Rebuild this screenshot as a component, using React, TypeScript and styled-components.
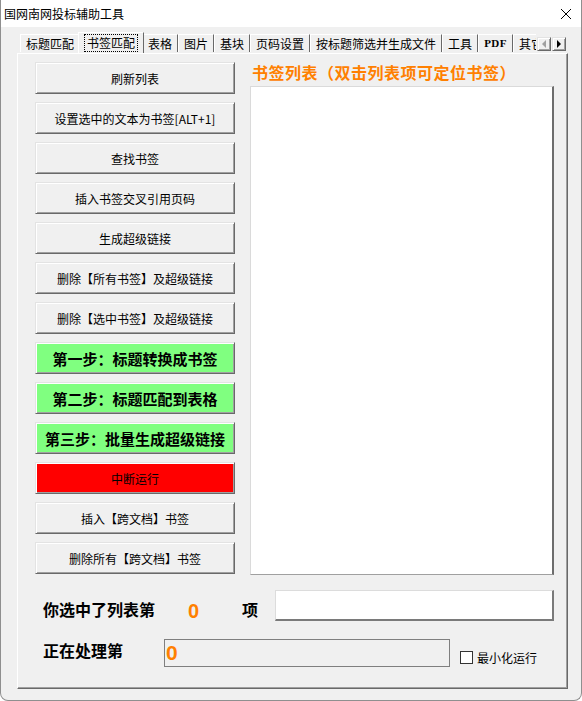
import React from "react";
import styled, { createGlobalStyle, css } from "styled-components";

const GlobalStyle = createGlobalStyle`
  html, body { margin: 0; padding: 0; background: #ffffff; }
  body { font-family: "Noto Sans CJK SC", "Liberation Sans", sans-serif; color: #000; }
  * { box-sizing: border-box; }
`;

const Window = styled.div`
  width: 582px;
  height: 701px;
  display: flex;
  flex-direction: column;
  background: #f0f0f0;
  border-left: 1px solid #8f8f8f;
  border-right: 1px solid #8f8f8f;
  border-bottom: 1px solid #8f8f8f;
  border-radius: 0 0 8px 8px;
  overflow: hidden;
`;

const TitleBar = styled.div`
  height: 27px;
  flex-shrink: 0;
  background: #ffffff;
  display: flex;
  align-items: center;
  justify-content: space-between;
  padding: 0 9px 0 3px;
`;

const Title = styled.span`
  font-size: 12px;
  line-height: 16px;
  color: #000;
`;

const CloseBox = styled.span`
  display: flex;
  width: 12px;
  height: 12px;
`;

const Body = styled.div`
  flex: 1;
  display: flex;
  flex-direction: column;
  padding: 6px 13px 11px 16px;
  min-height: 0;
`;

const TabStrip = styled.div`
  height: 20px;
  flex-shrink: 0;
  display: flex;
  align-items: flex-end;
  padding-left: 3px;
`;

const Tabs = styled.div`
  flex: 1;
  height: 21px;
  display: flex;
  align-items: flex-start;
  overflow: hidden;
  position: relative;
  z-index: 1;
`;

const Tab = styled.div<{ $active?: boolean; $latin?: boolean }>`
  flex-shrink: 0;
  height: 18px;
  margin-top: 2px;
  padding: 0 5px;
  border-top: 1px solid #ffffff;
  border-left: 1px solid #ffffff;
  border-right: 1px solid #696969;
  background: #f0f0f0;
  font-size: 12px;
  line-height: 17px;
  white-space: nowrap;
  ${(p) =>
    p.$latin &&
    css`
      font-family: "Liberation Serif", "DejaVu Serif", serif;
      font-size: 11px;
      font-weight: bold;
      letter-spacing: 0.5px;
    `}
  ${(p) =>
    p.$active &&
    css`
      height: 21px;
      margin: 0 -2px;
      padding: 1px 6px 0 6px;
      position: relative;
      z-index: 2;
    `}
`;

const Focus = styled.span`
  display: inline-block;
  outline: 1px dotted #000;
  outline-offset: 0px;
  padding: 0 2px;
  line-height: 16px;
`;

const Arrows = styled.div`
  display: flex;
  align-self: flex-start;
  margin-top: 4px;
  margin-right: 2px;
`;

const ArrowBtn = styled.div`
  width: 14px;
  height: 14px;
  display: flex;
  align-items: center;
  justify-content: center;
  background: #f0f0f0;
  border-color: #e3e3e3 #696969 #696969 #e3e3e3;
  border-style: solid;
  border-width: 1px;
  box-shadow: inset 1px 1px #fff, inset -1px -1px #a0a0a0;
  margin-left: 1px;
`;

const Panel = styled.div`
  flex: 1;
  min-height: 0;
  border-top: 1px solid #ffffff;
  border-left: 1px solid #ffffff;
  border-right: 1px solid #696969;
  border-bottom: 1px solid #696969;
  box-shadow: inset -1px -1px #a0a0a0;
  padding: 8px 0 0 17px;
  display: flex;
  flex-direction: column;
`;

const MainRow = styled.div`
  display: flex;
  gap: 15px;
`;

const ButtonColumn = styled.div`
  width: 200px;
  display: flex;
  flex-direction: column;
  gap: 8px;
`;

const Button = styled.div<{ $variant?: "green" | "red" }>`
  height: 32px;
  display: flex;
  align-items: center;
  justify-content: center;
  border-style: solid;
  border-width: 1px;
  border-color: #e3e3e3 #696969 #696969 #e3e3e3;
  box-shadow: inset 1px 1px #ffffff, inset -1px -1px #a0a0a0;
  background: #f0f0f0;
  font-size: 12px;
  white-space: nowrap;
  color: #000;
  ${(p) =>
    p.$variant === "green" &&
    css`
      background: #80ff80;
      font-size: 15px;
      font-weight: bold;
    `}
  ${(p) =>
    p.$variant === "red" &&
    css`
      background: #ff0000;
    `}
`;

const ListColumn = styled.div`
  width: 304px;
  display: flex;
  flex-direction: column;
`;

const ListTitle = styled.div`
  height: 20px;
  line-height: 20px;
  padding-left: 2px;
  color: #ff8000;
  font-size: 16px;
  font-weight: bold;
  letter-spacing: 0.5px;
  white-space: nowrap;
`;

const ListBox = styled.div`
  margin-top: 4px;
  height: 489px;
  background: #ffffff;
  border-top: 1px solid #dadada;
  border-left: 1px solid #dadada;
  border-right: 2px solid #6d6d6d;
  border-bottom: 1px solid #a0a0a0;
`;

const InfoRow = styled.div<{ $gapTop: number; $h: number }>`
  display: flex;
  align-items: flex-start;
  margin-top: ${(p) => p.$gapTop}px;
  height: ${(p) => p.$h}px;
  padding-left: 8px;
`;

const Label = styled.div<{ $w: number; $top?: number }>`
  width: ${(p) => p.$w}px;
  flex-shrink: 0;
  font-size: 16px;
  font-weight: bold;
  line-height: 22px;
  margin-top: ${(p) => p.$top ?? 0}px;
  white-space: nowrap;
`;

const Count = styled.div<{ $w?: number; $top?: number; $size?: number }>`
  ${(p) => (p.$w ? `width: ${p.$w}px;` : "")}
  flex-shrink: 0;
  font-family: "Liberation Sans", Arial, sans-serif;
  font-weight: bold;
  font-size: ${(p) => p.$size ?? 20}px;
  line-height: 24px;
  color: #ff8000;
  margin-top: ${(p) => p.$top ?? 0}px;
`;

const TextBox = styled.div`
  width: 279px;
  height: 31px;
  background: #ffffff;
  border-top: 1px solid #dcdcdc;
  border-left: 1px solid #dcdcdc;
  border-right: 2px solid #7a7a7a;
  border-bottom: 2px solid #7a7a7a;
`;

const ProgressBox = styled.div`
  width: 286px;
  height: 28px;
  border: 1px solid #7f7f7f;
  background: #f0f0f0;
  padding: 1px 0 0 1px;
`;

const CheckWrap = styled.label`
  display: flex;
  align-items: center;
  gap: 4px;
  margin: 11px 0 0 10px;
  font-size: 12px;
  line-height: 15px;
  white-space: nowrap;
`;

const CheckBox = styled.span`
  width: 13px;
  height: 13px;
  background: #ffffff;
  border: 1px solid #333333;
`;

const tabs = [
  "标题匹配",
  "书签匹配",
  "表格",
  "图片",
  "基块",
  "页码设置",
  "按标题筛选并生成文件",
  "工具",
  "PDF",
  "其它",
];

const buttons: { label: string; variant?: "green" | "red" }[] = [
  { label: "刷新列表" },
  { label: "设置选中的文本为书签[ALT+1]" },
  { label: "查找书签" },
  { label: "插入书签交叉引用页码" },
  { label: "生成超级链接" },
  { label: "删除【所有书签】及超级链接" },
  { label: "删除【选中书签】及超级链接" },
  { label: "第一步：标题转换成书签", variant: "green" },
  { label: "第二步：标题匹配到表格", variant: "green" },
  { label: "第三步：批量生成超级链接", variant: "green" },
  { label: "中断运行", variant: "red" },
  { label: "插入【跨文档】书签" },
  { label: "删除所有【跨文档】书签" },
];

export default function App() {
  return (
    <>
      <GlobalStyle />
      <Window>
        <TitleBar>
          <Title>国网南网投标辅助工具</Title>
          <CloseBox>
            <svg width="12" height="12" viewBox="0 0 12 12">
              <path d="M1 1 L11 11 M11 1 L1 11" stroke="#000" strokeWidth="1" fill="none" />
            </svg>
          </CloseBox>
        </TitleBar>
        <Body>
          <TabStrip>
            <Tabs>
              {tabs.map((t, i) => (
                <Tab key={t} $active={i === 1} $latin={t === "PDF"}>
                  {i === 1 ? <Focus>{t}</Focus> : t}
                </Tab>
              ))}
            </Tabs>
            <Arrows>
              <ArrowBtn>
                <svg width="6" height="8" viewBox="0 0 6 8">
                  <path d="M5 0 L1 4 L5 8 Z" fill="#a0a0a0" />
                </svg>
              </ArrowBtn>
              <ArrowBtn>
                <svg width="6" height="8" viewBox="0 0 6 8">
                  <path d="M1 0 L5 4 L1 8 Z" fill="#000" />
                </svg>
              </ArrowBtn>
            </Arrows>
          </TabStrip>
          <Panel>
            <MainRow>
              <ButtonColumn>
                {buttons.map((b) => (
                  <Button key={b.label} $variant={b.variant}>
                    {b.label}
                  </Button>
                ))}
              </ButtonColumn>
              <ListColumn>
                <ListTitle>书签列表（双击列表项可定位书签）</ListTitle>
                <ListBox />
              </ListColumn>
            </MainRow>
            <InfoRow $gapTop={15} $h={31}>
              <Label $w={145} $top={8}>你选中了列表第</Label>
              <Count $w={54} $top={9}>0</Count>
              <Label $w={33} $top={8}>项</Label>
              <TextBox />
            </InfoRow>
            <InfoRow $gapTop={18} $h={28}>
              <Label $w={121} $top={0}>正在处理第</Label>
              <ProgressBox>
                <Count $size={21}>0</Count>
              </ProgressBox>
              <CheckWrap>
                <CheckBox />
                最小化运行
              </CheckWrap>
            </InfoRow>
          </Panel>
        </Body>
      </Window>
    </>
  );
}
